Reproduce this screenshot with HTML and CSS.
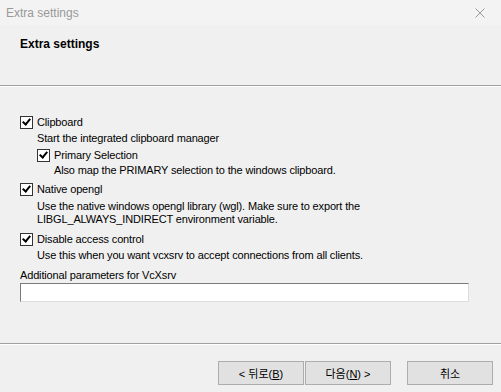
FILE: index.html
```html
<!DOCTYPE html>
<html lang="ko">
<head>
    <meta charset="UTF-8">
    <title>Extra settings</title>
    <link rel="stylesheet" href="styles.css">
</head>
<body>
    <div class="titlebar">
        <span class="title-text">Extra settings</span>
        <svg class="close-icon" width="10" height="10" viewBox="0 0 10 10">
            <path d="M0.5 0.5 L9.5 9.5 M9.5 0.5 L0.5 9.5" stroke="#9a9a9a" stroke-width="1" fill="none"/>
        </svg>
    </div>

    <div class="header">
        <h1>Extra settings</h1>
    </div>

    <div class="content">
        <label class="option">
            <span class="checkbox checked"></span>
            <span class="option-label">Clipboard</span>
        </label>
        <p class="option-desc">Start the integrated clipboard manager</p>

        <div class="sub-option">
            <label class="option">
                <span class="checkbox checked"></span>
                <span class="option-label">Primary Selection</span>
            </label>
            <p class="option-desc">Also map the PRIMARY selection to the windows clipboard.</p>
        </div>

        <label class="option">
            <span class="checkbox checked"></span>
            <span class="option-label">Native opengl</span>
        </label>
        <p class="option-desc wide-gap">Use the native windows opengl library (wgl). Make sure to export the<br>LIBGL_ALWAYS_INDIRECT environment variable.</p>

        <label class="option">
            <span class="checkbox checked"></span>
            <span class="option-label">Disable access control</span>
        </label>
        <p class="option-desc">Use this when you want vcxsrv to accept connections from all clients.</p>

        <p class="field-label">Additional parameters for VcXsrv</p>
        <input type="text" class="param-input">
    </div>

    <div class="footer">
        <button class="wiz-button">&lt; 뒤로(<u>B</u>)</button>
        <button class="wiz-button">다음(<u>N</u>) &gt;</button>
        <button class="wiz-button cancel">취소</button>
    </div>
</body>
</html>
```

FILE: styles.css
```css
body {
    margin: 0;
    width: 501px;
    height: 392px;
    overflow: hidden;
    background-color: #f0f0f0;
    font-family: "Liberation Sans", "Noto Sans CJK KR", sans-serif;
    font-size: 11px;
    letter-spacing: -0.15px;
    color: #000;
}

.titlebar {
    height: 25px;
    background-color: #f3f3f3;
    display: flex;
    align-items: center;
    justify-content: space-between;
    padding: 0 16px 0 6px;
}

.title-text {
    color: #999;
    font-size: 12px;
    letter-spacing: 0;
}

.header {
    height: 61px;
    border-bottom: 1px solid #a0a0a0;
    box-shadow: 0 1px 0 #fff;
    box-sizing: border-box;
    padding: 12px 0 0 20px;
}

.header h1 {
    margin: 0;
    font-size: 12px;
    font-weight: bold;
    letter-spacing: 0;
}

.content {
    height: 258px;
    box-sizing: border-box;
    padding: 29px 0 0 20px;
    border-bottom: 1px solid #a0a0a0;
    box-shadow: 0 1px 0 #fff;
}

.option {
    display: flex;
    align-items: center;
    height: 14px;
}

.checkbox {
    width: 11px;
    height: 11px;
    border: 1px solid #333;
    background-color: #fff;
    margin-right: 4px;
    position: relative;
}

.checkbox.checked::after {
    content: "";
    position: absolute;
    left: 3px;
    top: 0px;
    width: 3px;
    height: 6px;
    border: solid #000;
    border-width: 0 2px 2px 0;
    transform: rotate(40deg);
}

.option-desc {
    margin: 3px 0 3px 17px;
    line-height: 13px;
}

.option-desc.wide-gap {
    margin-top: 4px;
    margin-bottom: 6px;
}

.sub-option {
    margin-left: 17px;
    margin-bottom: 5px;
}

.sub-option .option-desc {
    margin-top: 2px;
    margin-bottom: 0;
}

.field-label {
    margin: 7px 0 1px 0;
    line-height: 13px;
}

.param-input {
    display: block;
    width: 449px;
    height: 19px;
    box-sizing: border-box;
    border: 1px solid #7a7a7a;
    border-right-color: #ddd;
    border-bottom-color: #ddd;
    background-color: #fff;
    margin: 0;
}

.footer {
    display: flex;
    padding: 17px 0 0 218px;
}

.wiz-button {
    width: 86px;
    height: 24px;
    margin-right: 1px;
    background-color: #e1e1e1;
    border: 1px solid #adadad;
    font-family: "Liberation Sans", "Noto Sans CJK KR", sans-serif;
    font-size: 11px;
    color: #000;
    padding: 0;
}

.wiz-button.cancel {
    margin-left: 15px;
}
```
